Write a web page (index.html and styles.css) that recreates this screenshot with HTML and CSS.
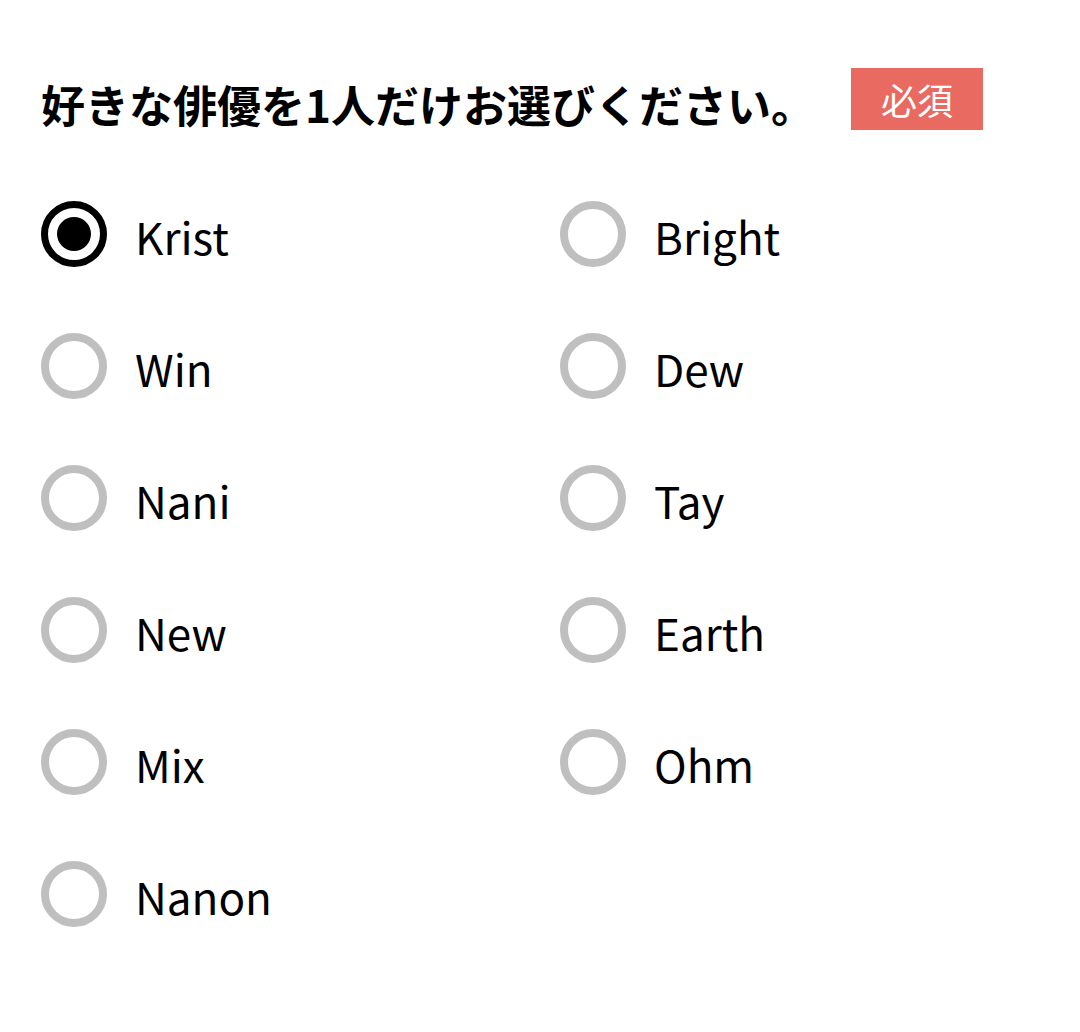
FILE: index.html
```html
<!DOCTYPE html>
<html lang="ja">
<head>
<meta charset="utf-8">
<link rel="stylesheet" href="styles.css">
</head>
<body>
<div class="page">
  <div class="header">
    <h1 class="title">好きな俳優を1人だけお選びください。</h1>
    <span class="badge">必須</span>
  </div>
  <div class="options">
    <label class="option"><span class="radio checked"></span><span class="label">Krist</span></label>
    <label class="option"><span class="radio"></span><span class="label">Bright</span></label>
    <label class="option"><span class="radio"></span><span class="label">Win</span></label>
    <label class="option"><span class="radio"></span><span class="label">Dew</span></label>
    <label class="option"><span class="radio"></span><span class="label">Nani</span></label>
    <label class="option"><span class="radio"></span><span class="label">Tay</span></label>
    <label class="option"><span class="radio"></span><span class="label">New</span></label>
    <label class="option"><span class="radio"></span><span class="label">Earth</span></label>
    <label class="option"><span class="radio"></span><span class="label">Mix</span></label>
    <label class="option"><span class="radio"></span><span class="label">Ohm</span></label>
    <label class="option"><span class="radio"></span><span class="label">Nanon</span></label>
  </div>
</div>
</body>
</html>
```
FILE: styles.css
```css
html, body {
  margin: 0;
  padding: 0;
  background: #ffffff;
}
body {
  font-family: "Noto Sans CJK JP", "Noto Sans", sans-serif;
  color: #000000;
}
.page {
  padding: 68px 0 0 41px;
}
.header {
  display: flex;
  align-items: center;
  height: 62px;
}
.title {
  margin: 0;
  font-size: 44px;
  font-weight: 700;
  line-height: 1;
  width: 810px;
  padding-top: 9px;
}
.badge {
  display: flex;
  align-items: center;
  justify-content: center;
  width: 132px;
  height: 62px;
  background: #e96a60;
  color: #ffffff;
  font-size: 36px;
  line-height: 1;
}
.options {
  margin-top: 71px;
  display: grid;
  grid-template-columns: 519px 519px;
  row-gap: 66px;
}
.option {
  display: flex;
  align-items: center;
  gap: 28px;
  height: 66px;
}
.radio {
  box-sizing: border-box;
  width: 66px;
  height: 66px;
  border-radius: 50%;
  border: 8px solid #bfbfbf;
  flex: none;
  display: flex;
  align-items: center;
  justify-content: center;
}
.radio.checked {
  border: 7px solid #000000;
}
.radio.checked::after {
  content: "";
  width: 34px;
  height: 34px;
  border-radius: 50%;
  background: #000000;
}
.label {
  font-size: 44px;
  line-height: 1;
  padding-top: 3px;
}
```
